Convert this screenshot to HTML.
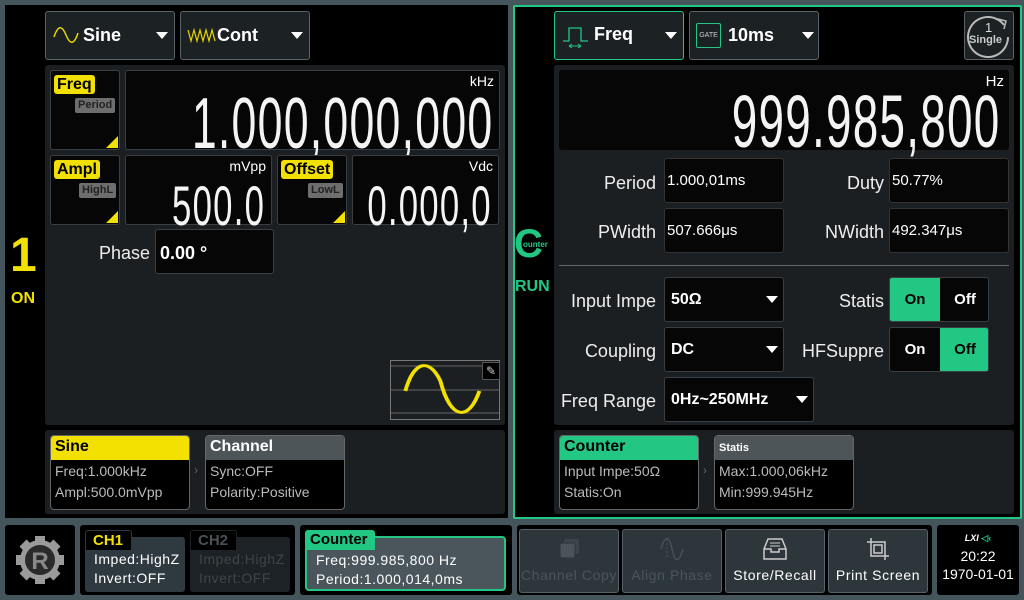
<!DOCTYPE html>
<html><head><meta charset="utf-8"><style>
*{margin:0;padding:0;box-sizing:border-box}
body{width:1024px;height:600px;background:#45555c;font-family:"Liberation Sans",sans-serif;position:relative;overflow:hidden;color:#fff}
.a{position:absolute}
.box{position:absolute;background:#060606;border:1px solid #3a3f43;border-radius:3px}
.dd{position:absolute;background:#1c2124;border:1px solid #5a6368;border-radius:3px;font-weight:bold;font-size:18px}
.tri{position:absolute;width:0;height:0;border-left:6px solid transparent;border-right:6px solid transparent;border-top:7px solid #fff}
.seg{position:absolute;right:6px;font-size:72px;line-height:1;transform:scaleX(0.62);transform-origin:right top;white-space:nowrap;letter-spacing:2px;color:#f4f4f4}
.unit{position:absolute;right:5px;top:2px;font-size:14px}
.lbl{position:absolute;font-size:18px;text-align:right;color:#eee}
.tag{position:absolute;background:#f2e000;color:#000;font-weight:bold;font-size:16px;padding:0 3px;border-radius:3px;line-height:19px}
.tag2{position:absolute;background:#6e6e6e;color:#222;font-weight:bold;font-size:11px;padding:0 3px;border-radius:2px;line-height:15px}
.corner{position:absolute;right:1px;bottom:1px;width:0;height:0;border-left:12px solid transparent;border-bottom:12px solid #f2e000}
.card{position:absolute;border:1px solid #666;border-radius:4px;background:#000;overflow:hidden}
.card .h{height:24px;font-weight:bold;font-size:16px;padding:2px 4px;color:#000}
.card .l{font-size:14px;color:#bbb;padding:2px 4px 0;line-height:19px}
.ib{position:absolute;background:#060606;border:1px solid #333;border-radius:3px;font-size:15px;padding:13px 2px 0}
.btn{position:absolute;top:529px;width:100px;height:64px;background:#2c363b;border:1px solid #56626a;border-radius:3px;text-align:center;font-size:14px;padding-top:37px;letter-spacing:0.6px;white-space:nowrap;overflow:hidden}
</style></head><body>

<!-- LEFT PANEL -->
<div class="a" style="left:5px;top:5px;width:503px;height:513px;background:#000"></div>
<div class="a" style="left:10px;top:228px;color:#f2e000;font-weight:bold;font-size:48px">1</div>
<div class="a" style="left:11px;top:290px;color:#f2e000;font-weight:bold;font-size:16px">ON</div>

<div class="dd" style="left:45px;top:11px;width:130px;height:49px">
 <svg class="a" style="left:6px;top:13px" width="28" height="20"><path d="M2 12 C6 0 10 0 14 10 C18 20 22 20 26 8" stroke="#e8d800" stroke-width="1.5" fill="none"/></svg>
 <span class="a" style="left:37px;top:13px">Sine</span><div class="tri" style="left:110px;top:20px"></div></div>
<div class="dd" style="left:180px;top:11px;width:130px;height:49px">
 <svg class="a" style="left:6px;top:14px" width="30" height="18"><path d="M1 4 L4 15 L7 4 L10 15 L13 4 L16 15 L19 4 L22 15 L25 4 L28 15" stroke="#e8d800" stroke-width="1.2" fill="none"/></svg>
 <span class="a" style="left:36px;top:13px">Cont</span><div class="tri" style="left:110px;top:20px"></div></div>

<div class="a" style="left:45px;top:65px;width:460px;height:360px;background:#1b1f22;border-radius:3px"></div>

<div class="box" style="left:50px;top:70px;width:70px;height:80px"><div class="tag" style="left:3px;top:4px">Freq</div><div class="tag2" style="left:24px;top:27px">Period</div><div class="corner"></div></div>
<div class="box" style="left:125px;top:70px;width:375px;height:80px"><div class="unit">kHz</div><div class="seg" style="top:17px">1.000,000,000</div></div>

<div class="box" style="left:50px;top:155px;width:70px;height:70px"><div class="tag" style="left:3px;top:4px">Ampl</div><div class="tag2" style="left:28px;top:27px">HighL</div><div class="corner"></div></div>
<div class="box" style="left:125px;top:155px;width:147px;height:70px"><div class="unit">mVpp</div><div class="seg" style="top:22px;font-size:56px">500.0</div></div>
<div class="box" style="left:277px;top:155px;width:70px;height:70px"><div class="tag" style="left:3px;top:4px">Offset</div><div class="tag2" style="left:30px;top:27px">LowL</div><div class="corner"></div></div>
<div class="box" style="left:352px;top:155px;width:147px;height:70px"><div class="unit">Vdc</div><div class="seg" style="top:22px;font-size:56px">0.000,0</div></div>

<div class="lbl" style="left:90px;top:243px;width:60px">Phase</div>
<div class="box" style="left:155px;top:229px;width:119px;height:45px;font-weight:bold;font-size:18px;padding:13px 4px">0.00 °</div>

<div class="a" style="left:390px;top:360px;width:110px;height:60px;border:1px solid #777">
 <svg class="a" style="left:0;top:0" width="108" height="58"><line x1="0" y1="5" x2="108" y2="5" stroke="#666"/><line x1="0" y1="29" x2="108" y2="29" stroke="#666"/><line x1="0" y1="52" x2="108" y2="52" stroke="#666"/><path d="M15 30 C22 -2 34 -2 42 20 C50 60 64 60 72 30" stroke="#f2e000" stroke-width="3" fill="none" transform="scale(1.3,1) translate(-4,0)"/></svg>
 <div class="a" style="left:91px;top:1px;width:18px;height:18px;background:#000;border:1px solid #555;font-size:12px;color:#ccc;text-align:center;line-height:16px">✎</div>
</div>

<div class="a" style="left:45px;top:430px;width:460px;height:84px;background:#1b1f22;border-radius:3px"></div>
<div class="card" style="left:50px;top:435px;width:140px;height:75px"><div class="h" style="background:#f2e000">Sine</div><div class="l">Freq:1.000kHz</div><div class="l">Ampl:500.0mVpp</div></div>
<div class="a" style="left:194px;top:463px;color:#666;font-size:12px">›</div>
<div class="card" style="left:205px;top:435px;width:140px;height:75px"><div class="h" style="background:#4e5559;color:#fff">Channel</div><div class="l">Sync:OFF</div><div class="l">Polarity:Positive</div></div>

<!-- RIGHT PANEL -->
<div class="a" style="left:513px;top:5px;width:509px;height:514px;background:#000;border:2px solid #22c784;border-radius:2px"></div>
<div class="a" style="left:514px;top:222px;color:#22c784;font-weight:bold;font-size:40px">C</div>
<div class="a" style="left:523px;top:240px;color:#22c784;font-size:8px;font-weight:bold">ounter</div>
<div class="a" style="left:515px;top:278px;color:#22c784;font-weight:bold;font-size:16px">RUN</div>

<div class="dd" style="left:554px;top:11px;width:130px;height:49px;border-color:#22c784">
 <svg class="a" style="left:6px;top:12px" width="32" height="24"><path d="M2 17 H8 V4 H20 V17 H27" stroke="#22c784" stroke-width="1.3" fill="none"/><path d="M8 22 H20 M8 22 l3 -2 M8 22 l3 2 M20 22 l-3 -2 M20 22 l-3 2" stroke="#22c784" stroke-width="1"/></svg>
 <span class="a" style="left:39px;top:12px">Freq</span><div class="tri" style="left:110px;top:20px"></div></div>
<div class="dd" style="left:689px;top:11px;width:130px;height:49px">
 <div class="a" style="left:6px;top:11px;width:25px;height:25px;border:1px solid #22c784;border-radius:2px;font-size:7px;font-weight:normal;color:#ccc;text-align:center;line-height:23px">GATE</div>
 <span class="a" style="left:38px;top:13px">10ms</span><div class="tri" style="left:112px;top:20px"></div></div>
<div class="dd" style="left:964px;top:11px;width:50px;height:49px">
 <svg class="a" style="left:1px;top:1px" width="46" height="46"><path d="M38 12 A20 20 0 1 0 42 24" stroke="#bbb" stroke-width="2" fill="none"/><path d="M32 6 L40 8 L38 16" stroke="#bbb" stroke-width="1.5" fill="none"/></svg>
 <span class="a" style="left:20px;top:8px;font-size:13px;font-weight:normal;color:#ddd">1</span>
 <span class="a" style="left:4px;top:22px;font-size:11px;color:#ccc">Single</span></div>

<div class="a" style="left:554px;top:65px;width:460px;height:360px;background:#1b1f22;border-radius:3px"></div>
<div class="box" style="left:559px;top:70px;width:450px;height:80px;border:none"><div class="unit" style="top:3px;font-size:15px">Hz</div><div class="seg" style="top:15px;right:8px;font-size:74px">999.985,800</div></div>

<div class="lbl" style="left:580px;top:173px;width:76px">Period</div>
<div class="ib" style="left:664px;top:158px;width:120px;height:45px">1.000,01ms</div>
<div class="lbl" style="left:820px;top:173px;width:64px">Duty</div>
<div class="ib" style="left:889px;top:158px;width:120px;height:45px">50.77%</div>
<div class="lbl" style="left:580px;top:222px;width:76px">PWidth</div>
<div class="ib" style="left:664px;top:208px;width:120px;height:45px">507.666μs</div>
<div class="lbl" style="left:800px;top:222px;width:84px">NWidth</div>
<div class="ib" style="left:889px;top:208px;width:120px;height:45px">492.347μs</div>

<div class="a" style="left:559px;top:265px;width:450px;height:1px;background:#666"></div>

<div class="lbl" style="left:540px;top:291px;width:116px">Input Impe</div>
<div class="box" style="left:664px;top:277px;width:120px;height:45px;font-weight:bold;font-size:16px;padding:13px 6px">50Ω<div class="tri" style="left:101px;top:18px"></div></div>
<div class="lbl" style="left:800px;top:291px;width:84px">Statis</div>
<div class="box" style="left:889px;top:277px;width:100px;height:45px;overflow:hidden;font-weight:bold;font-size:15px"><div class="a" style="left:0;top:0;width:50px;height:45px;background:#22c784;color:#000;text-align:center;line-height:43px">On</div><div class="a" style="left:50px;top:0;width:50px;text-align:center;line-height:43px">Off</div></div>
<div class="lbl" style="left:560px;top:341px;width:96px">Coupling</div>
<div class="box" style="left:664px;top:327px;width:120px;height:45px;font-weight:bold;font-size:16px;padding:13px 6px">DC<div class="tri" style="left:101px;top:18px"></div></div>
<div class="lbl" style="left:790px;top:341px;width:94px">HFSuppre</div>
<div class="box" style="left:889px;top:327px;width:100px;height:45px;overflow:hidden;font-weight:bold;font-size:15px"><div class="a" style="left:0;top:0;width:50px;text-align:center;line-height:43px">On</div><div class="a" style="left:50px;top:0;width:50px;height:45px;background:#22c784;color:#000;text-align:center;line-height:43px">Off</div></div>
<div class="lbl" style="left:540px;top:391px;width:116px">Freq Range</div>
<div class="box" style="left:664px;top:377px;width:150px;height:45px;font-weight:bold;font-size:16px;padding:13px 6px">0Hz~250MHz<div class="tri" style="left:131px;top:18px"></div></div>

<div class="a" style="left:554px;top:430px;width:460px;height:84px;background:#1b1f22;border-radius:3px"></div>
<div class="card" style="left:559px;top:435px;width:140px;height:75px"><div class="h" style="background:#22c784">Counter</div><div class="l">Input Impe:50Ω</div><div class="l">Statis:On</div></div>
<div class="a" style="left:703px;top:463px;color:#666;font-size:12px">›</div>
<div class="card" style="left:714px;top:435px;width:140px;height:75px"><div class="h" style="background:#4e5559;color:#fff;font-size:11px;padding-top:6px">Statis</div><div class="l">Max:1.000,06kHz</div><div class="l">Min:999.945Hz</div></div>

<!-- BOTTOM BAR -->
<div class="a" style="left:5px;top:525px;width:70px;height:70px;background:#000;border-radius:3px">
 <svg class="a" style="left:8px;top:8px" width="54" height="54" viewBox="0 0 54 54"><g fill="#9a9a9a"><circle cx="27" cy="27" r="20"/><rect x="22" y="3" width="10" height="48"/><rect x="3" y="22" width="48" height="10"/><rect x="22" y="3" width="10" height="48" transform="rotate(45 27 27)"/><rect x="22" y="3" width="10" height="48" transform="rotate(-45 27 27)"/></g><circle cx="27" cy="27" r="15" fill="#2a2a2a"/><text x="27" y="36" font-size="24" font-weight="bold" fill="#888" text-anchor="middle" font-family="Liberation Sans">R</text></svg></div>
<div class="a" style="left:80px;top:525px;width:215px;height:70px;background:#000;border-radius:3px"></div>
<div class="a" style="left:85px;top:537px;width:100px;height:55px;background:#2f3a40;border-radius:3px;font-size:14px;padding:13px 9px 0;letter-spacing:0.5px;line-height:19px">Imped:HighZ<br>Invert:OFF</div>
<div class="a" style="left:85px;top:530px;width:47px;height:20px;background:#000;border:1px solid #2f3a40;border-bottom:none;border-radius:3px 3px 0 0;color:#f2e000;font-weight:bold;font-size:15px;padding:1px 7px">CH1</div>
<div class="a" style="left:190px;top:537px;width:100px;height:55px;background:#1c2225;border-radius:3px;font-size:14px;padding:13px 9px 0;color:#3e4649;letter-spacing:0.5px;line-height:19px">Imped:HighZ<br>Invert:OFF</div>
<div class="a" style="left:190px;top:530px;width:47px;height:20px;background:#000;border:1px solid #1c2225;border-bottom:none;border-radius:3px 3px 0 0;color:#4a5255;font-weight:bold;font-size:15px;padding:1px 7px">CH2</div>
<div class="a" style="left:300px;top:525px;width:212px;height:70px;background:#000;border-radius:3px"></div>
<div class="a" style="left:305px;top:536px;width:201px;height:55px;background:#4a565c;border:2px solid #22c784;border-radius:4px;font-size:14px;padding:13px 9px 0;letter-spacing:0.5px;line-height:19px">Freq:999.985,800 Hz<br>Period:1.000,014,0ms</div>
<div class="a" style="left:305px;top:530px;width:70px;height:20px;background:#22c784;border-radius:3px 3px 0 0;color:#000;font-weight:bold;font-size:15px;padding:1px 5px">Counter</div>

<div class="a" style="left:517px;top:525px;width:415px;height:70px;background:#000;border-radius:3px"></div>
<div class="btn" style="left:519px;color:#4c5559">Channel Copy</div>
<div class="btn" style="left:622px;color:#4c5559">Align Phase</div>
<div class="btn" style="left:725px">Store/Recall</div>
<div class="btn" style="left:828px">Print Screen</div>
<svg class="a" style="left:558px;top:537px" width="24" height="24"><rect x="6" y="2" width="15" height="15" rx="2" fill="#3c4549"/><rect x="2" y="6" width="15" height="15" rx="2" fill="#4a5357" stroke="#2c363b"/></svg>
<svg class="a" style="left:659px;top:537px" width="26" height="24"><path d="M2 12 C6 -2 10 -2 13 12 C16 26 20 26 24 12" stroke="#4c5559" stroke-width="1.3" fill="none"/><line x1="8" y1="2" x2="8" y2="22" stroke="#4c5559" stroke-dasharray="2 2"/></svg>
<svg class="a" style="left:762px;top:537px" width="26" height="24"><path d="M2 12 L6 2 H20 L24 12 V22 H2 Z M2 12 H9 V15 H17 V12 H24" stroke="#ccc" stroke-width="1.5" fill="none"/><path d="M8 6 H18 M8 9 H18" stroke="#ccc"/></svg>
<svg class="a" style="left:866px;top:537px" width="24" height="24"><path d="M5 1 V19 H23 M1 5 H19 V23" stroke="#ccc" stroke-width="1.5" fill="none"/><rect x="8" y="8" width="8" height="8" fill="none" stroke="#ccc" stroke-width="1.5"/></svg>

<div class="a" style="left:937px;top:525px;width:82px;height:70px;background:#000;border-radius:3px;text-align:center">
 <div style="font-size:9px;font-weight:bold;font-style:italic;margin-top:8px">LXI <span style="color:#22c784;font-style:normal">◁‹</span></div>
 <div style="font-size:14px;margin-top:4px">20:22</div>
 <div style="font-size:14px;margin-top:2px">1970-01-01</div>
</div>
</body></html>
